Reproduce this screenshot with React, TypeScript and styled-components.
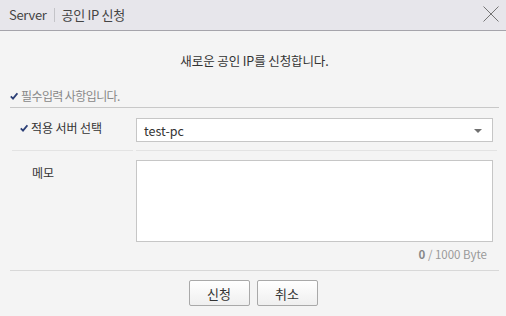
import React from "react";
import styled, { createGlobalStyle } from "styled-components";

const Global = createGlobalStyle`
  html, body { margin: 0; padding: 0; }
  body {
    width: 506px;
    height: 316px;
    overflow: hidden;
    background: #f4f4f4;
    font-family: "Noto Sans CJK KR", "Noto Sans", sans-serif;
    color: #333;
  }
`;

const Dialog = styled.div`
  width: 506px;
  height: 316px;
  display: flex;
  flex-direction: column;
  background: #f4f4f4;
`;

const Header = styled.div`
  height: 30px;
  flex: none;
  display: flex;
  align-items: center;
  justify-content: space-between;
  padding: 0 7px 0 9px;
  background: #e7e6eb;
  border-bottom: 1px solid #a5a4ab;
`;

const Title = styled.div`
  display: flex;
  align-items: center;
  font-size: 13px;
  line-height: 16px;
  color: #444;
  letter-spacing: -0.3px;
`;

const Sep = styled.span`
  width: 1px;
  height: 14px;
  background: #c4c4c8;
  margin: 0 7px 0 7px;
`;

const CloseBtn = styled.button`
  width: 16px;
  height: 16px;
  padding: 0;
  border: 0;
  background: transparent;
  display: flex;
  margin-top: -2px;
`;

const Body = styled.div`
  flex: 1;
  display: flex;
  flex-direction: column;
  padding: 0 7px 0 10px;
`;

const Intro = styled.div`
  height: 16px;
  line-height: 16px;
  margin-top: 22px;
  text-align: center;
  font-size: 12.5px;
  color: #333;
  letter-spacing: -0.1px;
`;

const Required = styled.div`
  height: 16px;
  line-height: 16px;
  margin-top: 19px;
  display: flex;
  align-items: center;
  gap: 3px;
  font-size: 12px;
  color: #888;
  letter-spacing: -0.6px;
  border-bottom: 1px solid #c8c8c8;
  padding-bottom: 3px;
  box-sizing: content-box;
`;

const Row = styled.div`
  display: flex;
  gap: 3px;
  padding: 0 2px;
`;

const LabelCell = styled.div<{ $top: number; $line?: boolean }>`
  width: 121px;
  flex: none;
  box-sizing: border-box;
  padding-top: ${(p) => p.$top}px;
  padding-left: 8px;
  display: flex;
  align-items: flex-start;
  gap: 3px;
  font-size: 12px;
  line-height: 16px;
  color: #333;
  letter-spacing: -0.1px;
  border-bottom: ${(p) => (p.$line ? "1px solid #e3e3e3" : "0")};
`;

const CheckWrap = styled.span`
  padding-top: 4px;
  display: flex;
`;

const LabelText = styled.span<{ $indent?: boolean }>`
  padding-left: ${(p) => (p.$indent ? "12px" : "0")};
`;

const ValueCell = styled.div<{ $top: number; $bottom: number; $line?: boolean }>`
  flex: 1;
  box-sizing: border-box;
  padding-top: ${(p) => p.$top}px;
  padding-bottom: ${(p) => p.$bottom}px;
  padding-right: 4px;
  display: flex;
  flex-direction: column;
  border-bottom: ${(p) => (p.$line ? "1px solid #e3e3e3" : "0")};
`;

const Select = styled.div`
  height: 24px;
  box-sizing: border-box;
  border: 1px solid #c6c6c6;
  background: #fff;
  display: flex;
  align-items: center;
  justify-content: space-between;
  padding: 0 10px 0 7px;
  font-size: 12.5px;
  color: #333;
`;

const Arrow = styled.span`
  width: 0;
  height: 0;
  border-left: 4px solid transparent;
  border-right: 4px solid transparent;
  border-top: 4px solid #707070;
  margin-top: 1px;
`;

const TextArea = styled.textarea`
  display: block;
  width: 357px;
  height: 82px;
  box-sizing: border-box;
  border: 1px solid #c6c6c6;
  background: #fff;
  resize: none;
  margin: 0;
  outline: none;
`;

const Counter = styled.div`
  width: 351px;
  height: 14px;
  line-height: 14px;
  margin-top: 5px;
  text-align: right;
  font-size: 11.5px;
  color: #999;
  letter-spacing: 0;
  b { color: #888; font-weight: bold; }
`;

const Footer = styled.div`
  margin-top: 9px;
  border-top: 1px solid #d8d8d8;
  display: flex;
  justify-content: center;
  gap: 7px;
  padding-top: 9px;
  padding-right: 3px;
`;

const Button = styled.button`
  width: 61px;
  height: 26px;
  box-sizing: border-box;
  border: 1px solid #a9a9a9;
  border-radius: 2px;
  background: linear-gradient(#ffffff, #efefef);
  font-family: "Noto Sans CJK KR", "Noto Sans", sans-serif;
  font-size: 13px;
  color: #333;
  padding: 0;
`;

const Check = ({ color = "#2c3f76" }: { color?: string }) => (
  <svg width="8" height="8" viewBox="0 0 8 8" style={{ flex: "none" }}>
    <path d="M0.8 4.4 L3 6.6 L7.4 1.2" fill="none" stroke={color} strokeWidth="1.8" />
  </svg>
);

export default function App() {
  return (
    <>
      <Global />
      <Dialog>
        <Header>
          <Title>
            Server<Sep />공인 IP 신청
          </Title>
          <CloseBtn aria-label="close">
            <svg width="16" height="16" viewBox="0 0 16 16">
              <path d="M0.5 0.5 L15.5 15.5 M15.5 0.5 L0.5 15.5" stroke="#666" strokeWidth="0.9" />
            </svg>
          </CloseBtn>
        </Header>
        <Body>
          <Intro>새로운 공인 IP를 신청합니다.</Intro>
          <Required>
            <Check />
            필수입력 사항입니다.
          </Required>
          <Row>
            <LabelCell $top={12} $line>
              <CheckWrap>
                <Check />
              </CheckWrap>
              <LabelText>적용 서버 선택</LabelText>
            </LabelCell>
            <ValueCell $top={10} $bottom={8} $line>
              <Select>
                test-pc
                <Arrow />
              </Select>
            </ValueCell>
          </Row>
          <Row>
            <LabelCell $top={14}>
              <LabelText $indent>메모</LabelText>
            </LabelCell>
            <ValueCell $top={9} $bottom={0}>
              <TextArea />
              <Counter>
                <b>0</b> / 1000 Byte
              </Counter>
            </ValueCell>
          </Row>
          <Footer>
            <Button>신청</Button>
            <Button>취소</Button>
          </Footer>
        </Body>
      </Dialog>
    </>
  );
}
